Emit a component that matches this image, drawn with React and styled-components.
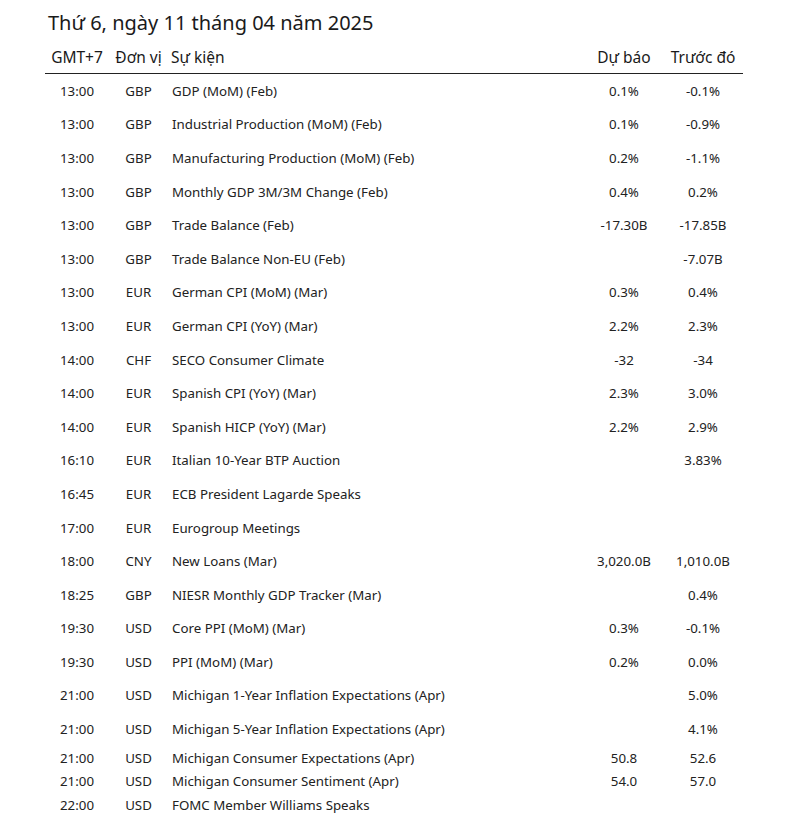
import React from 'react'
import styled, { createGlobalStyle } from 'styled-components'

const GlobalStyle = createGlobalStyle`
  body {
    margin: 0;
    background: #fff;
    font-family: "Noto Sans", "DejaVu Sans", sans-serif;
    color: #1f1f1f;
  }
`

const Page = styled.div`
  padding: 6px 43px 0 45px;
  width: 698px;
`

const Title = styled.h1`
  margin: 0 0 0 3px;
  font-size: 20px;
  font-weight: 400;
  line-height: 34px;
  color: #1a1a1a;
`

const Grid = styled.div`
  display: grid;
  grid-template-columns: 64px 59px 1fr 62px 88px;
`

const HeadRow = styled(Grid)`
  height: 33px;
  align-items: center;
  border-bottom: 1.5px solid #222;
  font-size: 15.5px;
  color: #1a1a1a;
`

const Row = styled(Grid)`
  height: ${p => (p.$compact ? '23.5px' : '33.6px')};
  align-items: center;
  font-size: 13.3px;
  color: #222;
`

const Cell = styled.div`
  text-align: ${p => p.$align || 'center'};
  padding-left: ${p => (p.$pad ? p.$pad : 0)}px;
  white-space: nowrap;
`

const rows = [
  ['13:00', 'GBP', 'GDP (MoM) (Feb)', '0.1%', '-0.1%'],
  ['13:00', 'GBP', 'Industrial Production (MoM) (Feb)', '0.1%', '-0.9%'],
  ['13:00', 'GBP', 'Manufacturing Production (MoM) (Feb)', '0.2%', '-1.1%'],
  ['13:00', 'GBP', 'Monthly GDP 3M/3M Change (Feb)', '0.4%', '0.2%'],
  ['13:00', 'GBP', 'Trade Balance (Feb)', '-17.30B', '-17.85B'],
  ['13:00', 'GBP', 'Trade Balance Non-EU (Feb)', '', '-7.07B'],
  ['13:00', 'EUR', 'German CPI (MoM) (Mar)', '0.3%', '0.4%'],
  ['13:00', 'EUR', 'German CPI (YoY) (Mar)', '2.2%', '2.3%'],
  ['14:00', 'CHF', 'SECO Consumer Climate', '-32', '-34'],
  ['14:00', 'EUR', 'Spanish CPI (YoY) (Mar)', '2.3%', '3.0%'],
  ['14:00', 'EUR', 'Spanish HICP (YoY) (Mar)', '2.2%', '2.9%'],
  ['16:10', 'EUR', 'Italian 10-Year BTP Auction', '', '3.83%'],
  ['16:45', 'EUR', 'ECB President Lagarde Speaks', '', ''],
  ['17:00', 'EUR', 'Eurogroup Meetings', '', ''],
  ['18:00', 'CNY', 'New Loans (Mar)', '3,020.0B', '1,010.0B'],
  ['18:25', 'GBP', 'NIESR Monthly GDP Tracker (Mar)', '', '0.4%'],
  ['19:30', 'USD', 'Core PPI (MoM) (Mar)', '0.3%', '-0.1%'],
  ['19:30', 'USD', 'PPI (MoM) (Mar)', '0.2%', '0.0%'],
  ['21:00', 'USD', 'Michigan 1-Year Inflation Expectations (Apr)', '', '5.0%'],
  ['21:00', 'USD', 'Michigan 5-Year Inflation Expectations (Apr)', '', '4.1%'],
  ['21:00', 'USD', 'Michigan Consumer Expectations (Apr)', '50.8', '52.6', true],
  ['21:00', 'USD', 'Michigan Consumer Sentiment (Apr)', '54.0', '57.0', true],
  ['22:00', 'USD', 'FOMC Member Williams Speaks', '', '', true],
]

export default function App() {
  return (
    <Page>
      <GlobalStyle />
      <Title>Thứ 6, ngày 11 tháng 04 năm 2025</Title>
      <HeadRow>
        <Cell>GMT+7</Cell>
        <Cell>Đơn vị</Cell>
        <Cell $align="left" $pad={3}>Sự kiện</Cell>
        <Cell>Dự báo</Cell>
        <Cell $pad={8}>Trước đó</Cell>
      </HeadRow>
      {rows.map(([time, cur, event, forecast, prev, compact], i) => (
        <Row key={i} $compact={compact}>
          <Cell>{time}</Cell>
          <Cell>{cur}</Cell>
          <Cell $align="left" $pad={4}>{event}</Cell>
          <Cell>{forecast}</Cell>
          <Cell $pad={8}>{prev}</Cell>
        </Row>
      ))}
    </Page>
  )
}
